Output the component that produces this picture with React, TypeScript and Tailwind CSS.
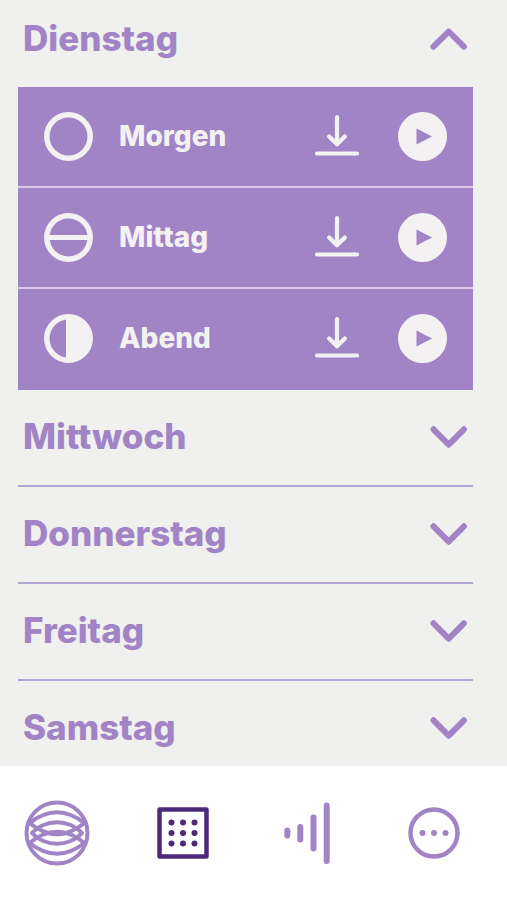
import { useState } from "react";
import type { ReactNode } from "react";

/* ---------- Data ---------- */
type Phase = "morning" | "noon" | "evening";

const sessions: { id: Phase; label: string }[] = [
  { id: "morning", label: "Morgen" },
  { id: "noon", label: "Mittag" },
  { id: "evening", label: "Abend" },
];

const days = ["Dienstag", "Mittwoch", "Donnerstag", "Freitag", "Samstag"];

/* ---------- Icons ---------- */
function Chevron({ open }: { open: boolean }) {
  return (
    <svg width="38" height="22" viewBox="0 0 38 22" fill="none" aria-hidden="true">
      <path
        d={open ? "M3.5 18.7 18.7 3.5l15.200 15.200" : "M3.5 3.3 18.7 18.700 33.900 3.300"}
        stroke="currentColor"
        strokeWidth="6"
        strokeLinecap="round"
        strokeLinejoin="round"
      />
    </svg>
  );
}

function PhaseIcon({ phase }: { phase: Phase }) {
  return (
    <svg width="49" height="49" viewBox="0 0 49 49" fill="none" aria-hidden="true">
      <circle cx="24.5" cy="24.5" r="21.7" stroke="currentColor" strokeWidth="5.5" />
      {phase === "noon" && <path d="M3 24.5h43" stroke="currentColor" strokeWidth="5" />}
      {phase === "evening" && <path d="M22 3h2.500a21.500 21.500 0 0 1 0 43H22z" fill="currentColor" />}
    </svg>
  );
}

function DownloadIcon() {
  return (
    <svg width="44" height="49" viewBox="0 0 44 49" fill="none" aria-hidden="true">
      <path
        d="M22 5v27M14.200 24.500l7.800 7.700 7.800-7.700M2 41.500h40"
        stroke="currentColor"
        strokeWidth="4.2"
        strokeLinecap="round"
        strokeLinejoin="round"
      />
    </svg>
  );
}

function PlayIcon() {
  return (
    <svg width="49" height="49" viewBox="0 0 49 49" aria-hidden="true">
      <circle cx="24.5" cy="24.5" r="24.5" fill="currentColor" />
      <path d="M18.500 16.500v16L34 24.500z" fill="#a184c6" />
    </svg>
  );
}

function NavIcon({ children }: { children: ReactNode }) {
  return (
    <svg width="66" height="66" viewBox="0 0 66 66" fill="none" stroke="currentColor" aria-hidden="true">
      {children}
    </svg>
  );
}

const navItems = [
  {
    id: "home",
    label: "Start",
    icon: (
      <NavIcon>
        <g strokeWidth="4">
          <circle cx="33" cy="33" r="30.5" />
          <path d="M5 23.500Q33 1 61 23.500M5 42.500Q33 65 61 42.500" />
          <path
            d="M8 33C14 26 24 22.200 33 22.200S52 26 58 33C52 40 42 43.800 33 43.800S14 40 8 33Z"
            strokeLinejoin="round"
          />
          <path d="M5 43.500Q33 20 61 43.500M5 22.500Q33 46 61 22.500" />
        </g>
      </NavIcon>
    ),
  },
  {
    id: "calendar",
    label: "Kalender",
    icon: (
      <NavIcon>
        <rect x="9.5" y="9.5" width="47" height="47" strokeWidth="4.5" strokeLinejoin="round" />
        <g fill="currentColor" stroke="none">
          {[22.5, 33, 43.5].map((y) =>
            [21.5, 33, 44.5].map((x) => <circle key={`${x}-${y}`} cx={x} cy={y} r="3" />)
          )}
        </g>
      </NavIcon>
    ),
  },
  {
    id: "sound",
    label: "Klang",
    icon: (
      <NavIcon>
        <path
          d="M12.300 30.500v5M25.300 27v12.500M38.500 17.500v31M51.700 5.500v55.500"
          strokeWidth="6"
          strokeLinecap="round"
        />
      </NavIcon>
    ),
  },
  {
    id: "more",
    label: "Mehr",
    icon: (
      <NavIcon>
        <circle cx="33" cy="33" r="23.5" strokeWidth="4.5" />
        <g fill="currentColor" stroke="none">
          <circle cx="21.5" cy="33" r="3" />
          <circle cx="33" cy="33" r="3" />
          <circle cx="44.5" cy="33" r="3" />
        </g>
      </NavIcon>
    ),
  },
];

/* ---------- Sessions ---------- */
function SessionList() {
  return (
    <ul className="divide-y-2 divide-[#d9c8e8] bg-[#a184c6] pb-0.5 text-[#f3f1f2]">
      {sessions.map(({ id, label }) => (
        <li key={id} className="box-content flex h-[99px] items-center px-[26px]">
          <PhaseIcon phase={id} />
          <span className="ml-[26px] flex-1 pb-0.5 text-[28px] leading-8 font-extrabold">{label}</span>
          <button type="button" aria-label={`${label} herunterladen`} className="cursor-pointer">
            <DownloadIcon />
          </button>
          <button type="button" aria-label={`${label} abspielen`} className="ml-[39px] cursor-pointer">
            <PlayIcon />
          </button>
        </li>
      ))}
    </ul>
  );
}

/* ---------- App ---------- */
export default function App() {
  const [openDay, setOpenDay] = useState<string | null>("Dienstag");
  const [tab, setTab] = useState("calendar");

  return (
    <div className="flex h-screen flex-col bg-[#f0f0ee] font-['Inter',sans-serif] text-[#a184c6]">
      <main className="min-h-0 flex-1 overflow-y-auto pr-[34px] pl-[18px] [scrollbar-width:none]">
        {days.map((day, i) => {
          const open = day === openDay;
          return (
            <section key={day} className={open ? "" : "border-b-2 border-[#b3a4d6]"}>
              <h2>
                <button
                  type="button"
                  aria-expanded={open}
                  onClick={() => setOpenDay(open ? null : day)}
                  className={`flex w-full cursor-pointer items-center justify-between pr-[5px] pl-[5px] text-[35px] leading-10 font-extrabold ${
                    i === 0 ? "h-[87px] pb-2.5" : "h-[95px] pb-0.5"
                  }`}
                >
                  <span className="pb-0.5">{day}</span>
                  <Chevron open={open} />
                </button>
              </h2>
              {open && <SessionList />}
            </section>
          );
        })}
      </main>

      <nav className="flex h-[134px] shrink-0 items-center justify-between bg-white pr-10 pl-6">
        {navItems.map(({ id, label, icon }) => (
          <button
            key={id}
            type="button"
            aria-label={label}
            aria-current={tab === id ? "page" : undefined}
            onClick={() => setTab(id)}
            className={`cursor-pointer ${tab === id ? "text-[#4b2a7b]" : ""}`}
          >
            {icon}
          </button>
        ))}
      </nav>
    </div>
  );
}
